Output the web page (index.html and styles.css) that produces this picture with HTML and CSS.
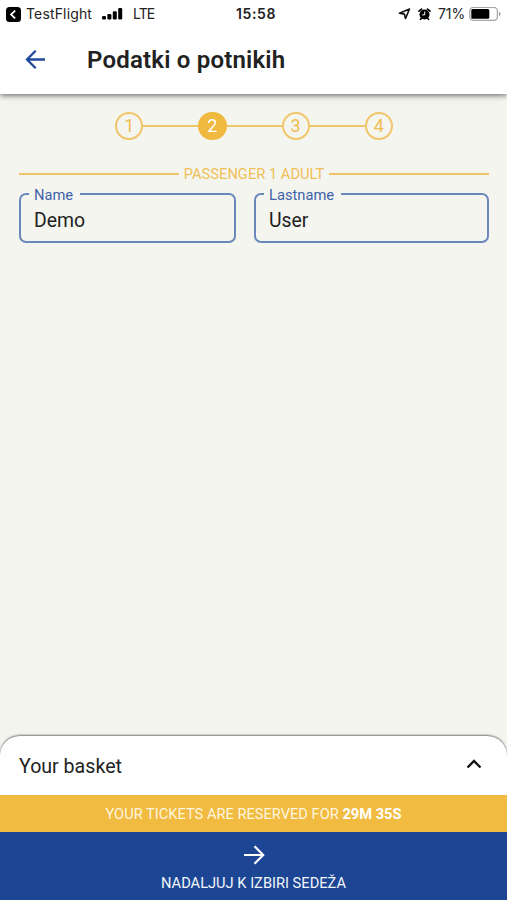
FILE: index.html
```html
<!DOCTYPE html>
<html lang="sl">
<head>
<meta charset="utf-8">
<title>Podatki o potnikih</title>
<link rel="stylesheet" href="styles.css">
</head>
<body>
<header class="top">
  <div class="status">
    <div class="status-left">
      <svg class="app-back" width="15" height="15" viewBox="0 0 15 15"><rect width="15" height="15" rx="3.5" fill="#000"/><path d="M9.2 3.7 5 7.5l4.2 3.8" fill="none" stroke="#fff" stroke-width="1.7"/></svg>
      <span class="app-name">TestFlight</span>
      <svg class="signal" width="21" height="13" viewBox="0 0 21 13"><rect y="8" width="4" height="3.5" rx="1.2"/><rect x="5.4" y="6" width="4" height="5.5" rx="1.2"/><rect x="10.8" y="3.2" width="4" height="8.3" rx="1.2"/><rect x="16.2" y="0" width="4" height="11.5" rx="1.2"/></svg>
      <span class="carrier">LTE</span>
    </div>
    <span class="time">15:58</span>
    <div class="status-right">
      <svg class="location" width="13" height="13" viewBox="0 0 13 13"><path d="M11.5 1 7.5 10.5 6.4 6.1 1.5 5.3Z" fill="none" stroke="#111" stroke-width="1.6" stroke-linejoin="round"/></svg>
      <svg class="alarm" width="13" height="13" viewBox="0 0 13 13"><circle cx="6.5" cy="6.5" r="5"/><path d="M1 3.2 3.5 1.1M12 3.2 9.5 1.1M3.2 10.5l-.7.8M9.8 10.5l.7.8" stroke="#000" stroke-width="1.7" stroke-linecap="round"/><path d="M6.7 3.5v3.4H4.2" fill="none" stroke="#fff" stroke-width="1"/></svg>
      <span class="percent">71%</span>
      <svg class="battery" width="32" height="15" viewBox="0 0 32 15"><rect x=".8" y=".3" width="27.6" height="13" rx="3.8" fill="#fff" stroke="#a6a6a6" stroke-width="1.3"/><rect x="2.3" y="1.9" width="18" height="9.8" rx="1.5"/><path d="M30 4.7q1.6.7 1.6 2.2T30 9.1Z" fill="#999"/></svg>
    </div>
  </div>
  <div class="title-row">
    <svg class="back" width="22" height="20" viewBox="0 0 22 20"><path d="M21 9.5H3M11.7.8 3 9.5l8.7 8.7" fill="none" stroke="#20489b" stroke-width="2.3"/></svg>
    <h1>Podatki o potnikih</h1>
  </div>
</header>
<main>
  <div class="steps">
    <span class="step">1</span><i></i><span class="step active">2</span><i></i><span class="step">3</span><i></i><span class="step">4</span>
  </div>
  <div class="divider"><span>PASSENGER 1 ADULT</span></div>
  <div class="fields">
    <fieldset class="field first"><legend><span>Name</span></legend><div class="value">Demo</div></fieldset>
    <fieldset class="field last"><legend><span>Lastname</span></legend><div class="value">User</div></fieldset>
  </div>
</main>
<footer>
  <div class="basket">
    <span>Your basket</span>
    <svg width="16" height="10" viewBox="0 0 16 10"><path d="M1.5 8.5 8 2l6.5 6.5" fill="none" stroke="#111" stroke-width="2.3"/></svg>
  </div>
  <div class="reserved"><span>YOUR TICKETS ARE RESERVED FOR <b>29M 35S</b></span></div>
  <div class="next">
    <svg width="22" height="20" viewBox="0 0 22 20"><path d="M1 10h19M11.5 1.3 20.2 10l-8.7 8.7" fill="none" stroke="#fff" stroke-width="2.2"/></svg>
    <span>NADALJUJ K IZBIRI SEDEŽA</span>
  </div>
</footer>
</body>
</html>
```
FILE: styles.css
```css
* { box-sizing: border-box; }
body {
  margin: 0;
  height: 900px;
  display: flex;
  flex-direction: column;
  overflow: hidden;
  background: #f4f5ef;
  color: #222;
  font-family: Roboto, "Liberation Sans", sans-serif;
}
svg { display: block; flex: none; }
.top {
  height: 94px;
  background: #fff;
  box-shadow: 0 1px 6px rgba(0, 0, 0, .65);
}
.status {
  height: 28px;
  display: grid;
  grid-template-columns: 1fr auto 1fr;
  align-items: center;
  padding: 0 6px;
  font: 14px/28px Inter, sans-serif;
  color: #222;
}
.status-left, .status-right { display: flex; align-items: center; }
.status-right { justify-content: flex-end; }
.app-name { margin-left: 5px; width: 67px; letter-spacing: .15px; }
.signal { margin: 0 10px 0 9px; }
.carrier { letter-spacing: -.9px; }
.time { font-weight: 600; letter-spacing: .6px; margin-left: 5px; }
.location { margin-right: 7px; }
.alarm { margin-right: 7px; }
.percent { width: 28px; margin-right: 3px; letter-spacing: -.1px; }
.title-row { display: flex; align-items: center; height: 64px; padding-left: 24px; }
h1 { margin: 0 0 0 41px; font-size: 24px; line-height: 30px; font-weight: 600; letter-spacing: .2px; }
main { flex: 1; padding: 18px 18px 0 19px; }
.steps { display: flex; align-items: center; justify-content: center; height: 28px; }
.steps i { width: 55px; height: 2px; background: #f0c66b; }
.step {
  width: 28.2px;
  height: 28px;
  border: 2px solid #f1c56b;
  border-radius: 50%;
  color: #efbc4f;
  font-size: 18px;
  line-height: 24px;
  text-align: center;
}
.step.active { background: #f0b93f; border-color: #f0b93f; color: #fff; }
.divider {
  display: flex;
  align-items: center;
  gap: 5px;
  height: 16px;
  margin-top: 26px;
  color: #efbf58;
  font-size: 14.7px;
  white-space: nowrap;
}
.divider::before, .divider::after { content: ""; flex: 1; height: 1.5px; background: #f0c468; }
.fields { display: flex; gap: 18px; margin-top: 4px; }
.field {
  min-width: 0;
  height: 57px;
  margin: 0;
  padding: 0 14px 0 8px;
  border: 2px solid #6b88bc;
  border-radius: 7px;
}
.first { width: 217px; }
.last { width: 235px; }
legend { padding: 3px 7px 0 5px; font-size: 14.7px; line-height: 13px; color: #3f62aa; }
.value { padding: 7px 0 0 5px; font-size: 19.4px; line-height: 24px; }
.basket {
  display: flex;
  align-items: center;
  justify-content: space-between;
  height: 59px;
  padding: 2px 25px 0 19px;
  border-radius: 20px 20px 0 0;
  background: #fff;
  box-shadow: 0 -1px 2px rgba(0, 0, 0, .5);
  font-size: 19.6px;
}
.basket svg { margin-bottom: 6px; }
.reserved {
  height: 37px;
  background: #f1ba40;
  color: #fff6df;
  font-size: 14.65px;
  line-height: 38px;
  text-align: center;
}
.reserved b { color: #fff; }
.next {
  display: flex;
  flex-direction: column;
  align-items: center;
  height: 68px;
  padding-top: 13px;
  background: #1c4693;
  color: #f2f5fb;
  font-size: 14.65px;
  line-height: 18px;
}
.next span { margin-top: 9px; }
```
